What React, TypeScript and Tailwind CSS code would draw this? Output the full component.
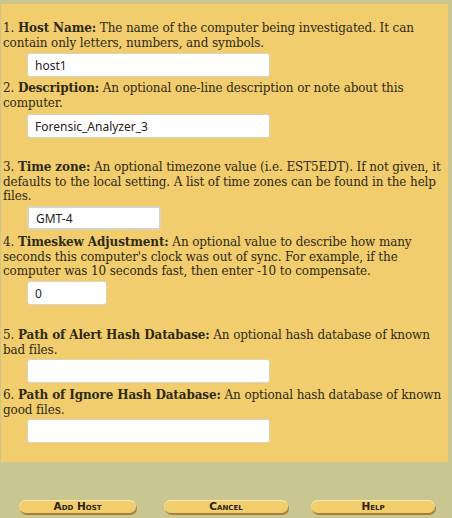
import React from 'react'

const serif =
  "font-['DejaVu_Serif',serif] text-[12px] leading-[14.5px] tracking-[-0.12px] text-[#2e2a14]"
const field =
  "block h-[24px] rounded-[3px] border border-[#d8d4c4] bg-white pl-[7px] font-['Noto_Sans',sans-serif] text-[12px] text-[#222] outline-none"

function Item({
  n,
  label,
  children,
  className,
}: {
  n: number
  label: string
  children: React.ReactNode
  className: string
}) {
  return (
    <p className={`${serif} ${className}`}>
      {n}. <b>{label}:</b> {children}
    </p>
  )
}

function PillButton({ label }: { label: string }) {
  return (
    <button
      type="button"
      className="h-[13px] rounded-full bg-[#f2cd6c] shadow-[1px_2px_0_#a4823e,inset_0_1px_0_#fbe9b4] font-['DejaVu_Sans',sans-serif] text-[10.5px] leading-[13px] font-bold text-[#2a2410] [font-variant:small-caps]"
    >
      {label}
    </button>
  )
}

export default function App() {
  return (
    <div className="h-[518px] w-[452px] bg-[#c9c68f] pt-[4px] pl-[1px]">
      <div className="w-[447px] bg-[#f2cd6e] pt-[17px] pb-[19px] pl-[2px]">
        <Item n={1} label="Host Name" className="">
          The name of the computer being investigated. It can contain only letters, numbers, and symbols.
        </Item>
        <input className={`${field} mt-[3px] ml-[24px] w-[243px]`} defaultValue="host1" />

        <Item n={2} label="Description" className="mt-[4px]">
          An optional one-line description or note about this computer.
        </Item>
        <input className={`${field} mt-[4px] ml-[24px] w-[243px]`} defaultValue="Forensic_Analyzer_3" />

        <Item n={3} label="Time zone" className="mt-[22px]">
          An optional timezone value (i.e. EST5EDT). If not given, it defaults to the local setting. A list of
          time zones can be found in the help files.
        </Item>
        <input
          className={`${field} mt-[2.5px] ml-[24px] w-[134px] border-2 border-[#3d7fe0] pl-[6px]`}
          defaultValue="GMT-4"
        />

        <Item n={4} label="Timeskew Adjustment" className="mt-[5px]">
          An optional value to describe how many seconds this computer's clock was out of sync. For example, if
          the computer was 10 seconds fast, then enter -10 to compensate.
        </Item>
        <input className={`${field} mt-[2.5px] ml-[24px] w-[80px]`} defaultValue="0" />

        <Item n={5} label="Path of Alert Hash Database" className="mt-[23px]">
          An optional hash database of known bad files.
        </Item>
        <input className={`${field} mt-[2px] ml-[24px] w-[243px]`} />

        <Item n={6} label="Path of Ignore Hash Database" className="mt-[5px]">
          An optional hash database of known good files.
        </Item>
        <input className={`${field} mt-[2px] ml-[24px] w-[243px]`} />
      </div>

      <div className="mt-[38px] flex pl-[18px]">
        <div className="grid w-[117px]">
          <PillButton label="Add Host" />
        </div>
        <div className="ml-[28px] grid w-[124px]">
          <PillButton label="Cancel" />
        </div>
        <div className="ml-[23px] grid w-[124px]">
          <PillButton label="Help" />
        </div>
      </div>
    </div>
  )
}
